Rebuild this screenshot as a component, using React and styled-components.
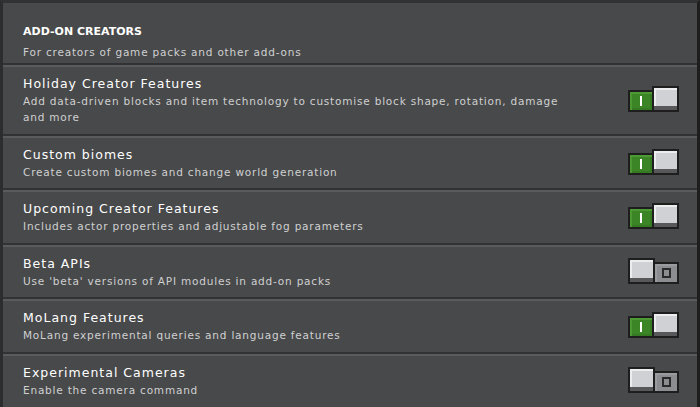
import React from "react";
import styled, { createGlobalStyle } from "styled-components";

const GlobalStyle = createGlobalStyle`
  html, body {
    margin: 0;
    padding: 0;
    background: #1e1e1f;
  }
  body {
    font-family: "DejaVu Sans", "Liberation Sans", sans-serif;
  }
`;

const features = [
  {
    title: "Holiday Creator Features",
    description:
      "Add data-driven blocks and item technology to customise block shape, rotation, damage and more",
    on: true,
  },
  {
    title: "Custom biomes",
    description: "Create custom biomes and change world generation",
    on: true,
  },
  {
    title: "Upcoming Creator Features",
    description: "Includes actor properties and adjustable fog parameters",
    on: true,
  },
  {
    title: "Beta APIs",
    description: "Use 'beta' versions of API modules in add-on packs",
    on: false,
  },
  {
    title: "MoLang Features",
    description: "MoLang experimental queries and language features",
    on: true,
  },
  {
    title: "Experimental Cameras",
    description: "Enable the camera command",
    on: false,
  },
];

function Toggle({ on }) {
  return (
    <ToggleWrap>
      {on ? (
        <>
          <Track on>
            <OnMark />
          </Track>
          <Knob />
        </>
      ) : (
        <>
          <Knob />
          <Track>
            <OffMark />
          </Track>
        </>
      )}
    </ToggleWrap>
  );
}

function App() {
  return (
    <>
      <GlobalStyle />
      <Panel>
        <Header>
          <Heading>Add-On Creators</Heading>
          <Description>For creators of game packs and other add-ons</Description>
        </Header>
        {features.map((f) => (
          <Row key={f.title}>
            <TextBlock>
              <Title>{f.title}</Title>
              <Description>{f.description}</Description>
            </TextBlock>
            <Toggle on={f.on} />
          </Row>
        ))}
      </Panel>
    </>
  );
}

export default App;

const Panel = styled.div`
  width: 700px;
  height: 407px;
  box-sizing: border-box;
  overflow: hidden;
  background: #48494a;
  border-top: 3px solid #313233;
  border-left: 3px solid #2c2d2e;
  border-right: 3px solid #1e1e1f;
  display: flex;
  flex-direction: column;
`;

const Header = styled.div`
  padding: 21px 20px 3px;
  display: flex;
  flex-direction: column;
  gap: 4px;
`;

const Heading = styled.div`
  font-size: 11px;
  font-weight: bold;
  letter-spacing: 0;
  text-transform: uppercase;
  line-height: 16px;
  color: #ffffff;
`;

const Row = styled.div`
  display: flex;
  align-items: center;
  justify-content: space-between;
  padding: 11px 18px 8.5px 20px;
  border-top: 2px solid #313233;
  box-shadow: inset 0 2px 0 #5a5b5c;
  flex-shrink: 0;
`;

const TextBlock = styled.div`
  display: flex;
  flex-direction: column;
  gap: 1px;
  max-width: 545px;
`;

const Title = styled.div`
  font-size: 12.5px;
  line-height: 16px;
  letter-spacing: 1px;
  color: #ffffff;
`;

const Description = styled.div`
  font-size: 10.5px;
  line-height: 16px;
  letter-spacing: 0.8px;
  color: #cfd0d1;
`;

const ToggleWrap = styled.div`
  display: flex;
  align-items: flex-end;
  height: 26px;
  margin-top: -3px;
`;

const Track = styled.div`
  width: 26px;
  height: 22px;
  box-sizing: border-box;
  border: 2px solid #1e1e1f;
  background: ${(p) => (p.on ? "#3c8527" : "#8c8d90")};
  box-shadow: ${(p) =>
    p.on
      ? "inset 2px 2px 0 #4d9a35, inset -2px -2px 0 #357a22"
      : "inset 2px 2px 0 #9a9b9e"};
  display: flex;
  align-items: center;
  justify-content: center;
  margin-left: -2px;

  &:first-child {
    margin-left: 0;
  }
`;

const OnMark = styled.div`
  width: 2px;
  height: 10px;
  background: #ffffff;
`;

const OffMark = styled.div`
  width: 9px;
  height: 10px;
  box-sizing: border-box;
  border: 2px solid #2a2a2b;
`;

const Knob = styled.div`
  width: 27px;
  height: 26px;
  box-sizing: border-box;
  border: 2px solid #1e1e1f;
  background: #d0d1d4;
  box-shadow: inset 0 -4px 0 #58585a, inset 2px 2px 0 #ecedee;
  margin-left: -2px;
  position: relative;
  z-index: 1;

  &:first-child {
    margin-left: 0;
  }
`;
